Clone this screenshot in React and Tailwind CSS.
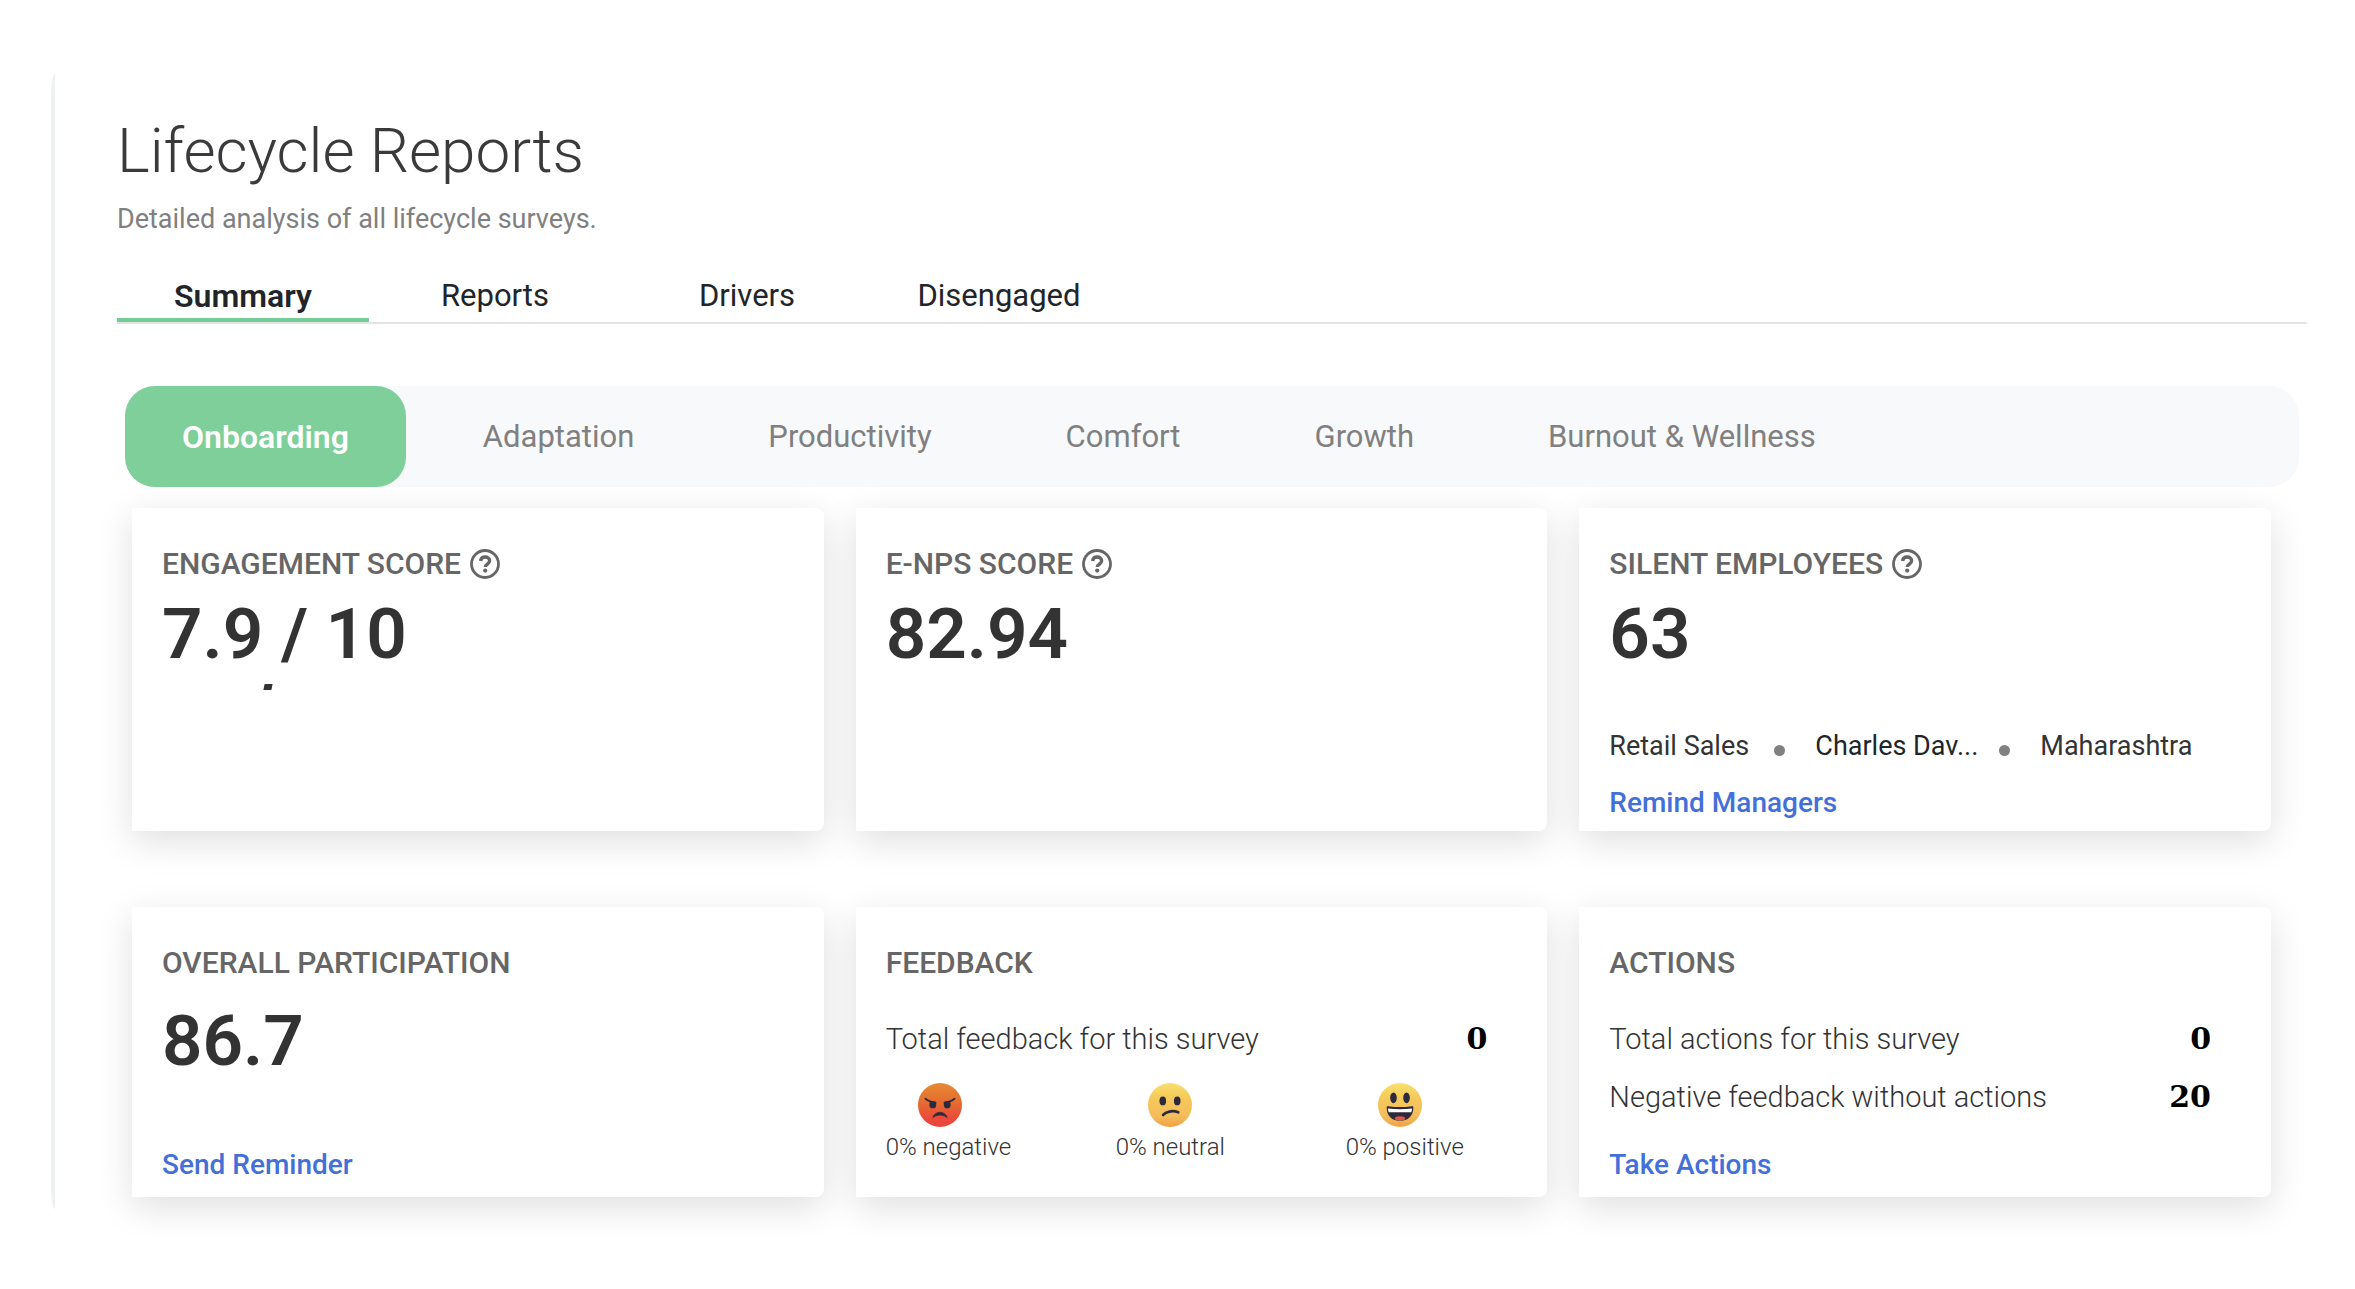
import { useState } from "react";

const TABS = ["Summary", "Reports", "Drivers", "Disengaged"];

const STAGES = [
  "Onboarding",
  "Adaptation",
  "Productivity",
  "Comfort",
  "Growth",
  "Burnout & Wellness",
];

const HelpIcon = () => (
  <svg className="w-8 h-8 shrink-0" viewBox="0 0 32 32" fill="none">
    <circle cx="16" cy="16" r="13.5" stroke="currentColor" strokeWidth="2.8" />
    <path
      d="M11.6 13c.2-2.6 2-4 4.500-4 2.600 0 4.500 1.400 4.500 3.700 0 1.600-.9 2.600-2.300 3.500-1.300.8-2 1.300-2 2.700"
      stroke="currentColor"
      strokeWidth="3.4"
    />
    <circle cx="16.2" cy="22.6" r="2.1" fill="currentColor" />
  </svg>
);

const AngryFace = () => (
  <svg className="w-11 h-11" viewBox="0 0 64 64">
    <defs>
      <linearGradient id="angry" x1="0" y1="0" x2="0" y2="1">
        <stop offset="0" stopColor="#e68a33" />
        <stop offset="0.45" stopColor="#e56b30" />
        <stop offset="0.8" stopColor="#ea4a3a" />
        <stop offset="1" stopColor="#ec4440" />
      </linearGradient>
    </defs>
    <circle cx="32" cy="32" r="32" fill="url(#angry)" />
    <path
      d="M11 23c4 3.500 8 5 14.500 5.500M53 23c-4 3.500-8 5-14.500 5.500"
      fill="none"
      stroke="#2b2b3d"
      strokeWidth="2.800"
      strokeLinecap="round"
    />
    <ellipse cx="21.5" cy="31.5" rx="5" ry="5.4" fill="#2b2b3d" />
    <ellipse cx="42.5" cy="31.5" rx="5" ry="5.4" fill="#2b2b3d" />
    <path
      d="M21.500 50.500c1.500-5 5.500-8 10.500-8s9 3 10.500 8c-3-2.500-6.500-3.800-10.500-3.800s-7.500 1.300-10.500 3.800z"
      fill="#2b2b3d"
      stroke="#2b2b3d"
      strokeLinejoin="round"
    />
  </svg>
);

const ConfusedFace = () => (
  <svg className="w-11 h-11" viewBox="0 0 64 64">
    <defs>
      <linearGradient id="confused" x1="0" y1="0" x2="0" y2="1">
        <stop offset="0" stopColor="#f8e06c" />
        <stop offset="0.35" stopColor="#f5c95a" />
        <stop offset="0.75" stopColor="#f4bd5c" />
        <stop offset="1" stopColor="#f0a044" />
      </linearGradient>
    </defs>
    <circle cx="32" cy="32" r="32" fill="url(#confused)" />
    <ellipse cx="21.5" cy="26" rx="4.8" ry="6.5" fill="#2b2b3d" />
    <ellipse cx="42.5" cy="26" rx="4.8" ry="6.5" fill="#2b2b3d" />
    <path
      d="M22 46.500c4-5 13-7 22-4"
      fill="none"
      stroke="#2b2b3d"
      strokeWidth="4"
      strokeLinecap="round"
    />
  </svg>
);

const HappyFace = () => (
  <svg className="w-11 h-11" viewBox="0 0 64 64">
    <defs>
      <linearGradient id="happy" x1="0" y1="0" x2="0" y2="1">
        <stop offset="0" stopColor="#f8e06c" />
        <stop offset="0.35" stopColor="#f5c95a" />
        <stop offset="0.75" stopColor="#f4bd5c" />
        <stop offset="1" stopColor="#f0a044" />
      </linearGradient>
      <clipPath id="mouth">
        <path d="M12.500 35.500c0-1.500 1-2 2.500-1.800 11 1.800 23 1.800 34 0 1.500-.2 2.500.3 2.500 1.800C51.500 48 43 55 32 55S12.500 48 12.500 35.500z" />
      </clipPath>
    </defs>
    <circle cx="32" cy="32" r="32" fill="url(#happy)" />
    <ellipse cx="22.5" cy="21.5" rx="4.8" ry="7.8" fill="#2b2b3d" />
    <ellipse cx="41.5" cy="21.5" rx="4.8" ry="7.8" fill="#2b2b3d" />
    <g clipPath="url(#mouth)">
      <rect x="10" y="30" width="44" height="28" fill="#2b2b3d" />
      <path d="M14.500 37c11.500 1.500 23.500 1.500 35 0 0 2-.5 4-1.200 5.500H15.700c-.7-1.500-1.200-3.500-1.200-5.500z" fill="#fff" />
      <ellipse cx="32" cy="51.5" rx="7.5" ry="3" fill="#e0544c" />
    </g>
  </svg>
);

const SENTIMENTS = [
  { label: "0% negative", Face: AngryFace },
  { label: "0% neutral", Face: ConfusedFace },
  { label: "0% positive", Face: HappyFace },
];

const Card = ({ title, help, children }) => (
  <section className="flex flex-col rounded-r-lg bg-white px-[30px] pt-9 shadow-[0_10px_36px_rgba(0,0,0,0.13)]">
    <h2 className="flex items-center gap-2 text-[30px] leading-10 font-medium text-[#666]">
      {title}
      {help && (
        <button type="button" aria-label={`About ${title.toLowerCase()}`}>
          <HelpIcon />
        </button>
      )}
    </h2>
    {children}
  </section>
);

const Score = ({ children }) => (
  <div className="relative text-[71px] leading-[76px] font-semibold text-[#333]">{children}</div>
);

const CardLink = ({ children }) => (
  <a href="#" className="self-start text-[28px] leading-9 font-medium text-[#4370d8]">
    {children}
  </a>
);

const Dot = () => <span className="mt-2 h-[11px] w-[11px] shrink-0 rounded-full bg-[#808080]" />;

const CountRow = ({ label, value }) => (
  <div className="flex items-center justify-between pr-[30px] leading-10">
    <dt className="text-[29px] font-light text-[#333]">{label}</dt>
    <dd className="font-['DejaVu_Serif',serif] text-[30px] leading-9 font-bold text-black">
      {value}
    </dd>
  </div>
);

const App = () => {
  const [tab, setTab] = useState("Summary");
  const [stage, setStage] = useState("Onboarding");

  return (
    <div className="bg-white py-[74px] pl-[51px] font-['Roboto',sans-serif]">
      <main className="rounded-l-[4px_24px] border-l-4 border-[#edf2f1] pt-[41px] pr-12 pb-3 pl-[62px]">
        <h1 className="text-[62px] leading-[72px] font-light text-[#3a3a3d]">Lifecycle Reports</h1>
        <p className="mt-3 text-[27px] leading-10 text-[#808080]">
          Detailed analysis of all lifecycle surveys.
        </p>

        <nav className="mt-[35px] flex border-b-2 border-[#e3e3e3]">
          {TABS.map((name) => (
            <button
              key={name}
              type="button"
              onClick={() => setTab(name)}
              className={`w-[252px] border-b-4 leading-11 text-[#212529] ${
                tab === name
                  ? "border-[#74cc97] text-[32px] font-semibold"
                  : "border-transparent text-[31px]"
              }`}
            >
              {name}
            </button>
          ))}
        </nav>

        <div className="mx-2 mt-[62px] flex rounded-[30px] bg-[#f8f9fb]">
          {STAGES.map((name) => (
            <button
              key={name}
              type="button"
              onClick={() => setStage(name)}
              className={`mr-5 h-[101px] rounded-[30px] px-[57px] leading-10 ${
                stage === name
                  ? "bg-[#7ecf9a] text-[32px] font-semibold text-white"
                  : "text-[31px] text-[#808080]"
              }`}
            >
              {name}
            </button>
          ))}
        </div>

        <div className="mt-[21px] mr-9 ml-[15px] grid grid-cols-3 grid-rows-[323px_290px] gap-x-8 gap-y-[76px]">
          <Card title="ENGAGEMENT SCORE" help>
            <div className="mt-3">
              <Score>
                7.9 / 10
                <span className="absolute top-[88px] left-[102px] h-1.5 w-2 -skew-x-12 bg-[#333]" />
              </Score>
            </div>
          </Card>

          <Card title="E-NPS SCORE" help>
            <div className="mt-3">
              <Score>82.94</Score>
            </div>
          </Card>

          <Card title="SILENT EMPLOYEES" help>
            <div className="mt-3">
              <Score>63</Score>
            </div>
            <ul className="mt-auto flex items-center text-[27px] leading-9 text-[#333]">
              <li className="w-[165px]">Retail Sales</li>
              <Dot />
              <li className="w-[214px] pl-[30px] text-[#212529]">Charles Dav...</li>
              <Dot />
              <li className="pl-[30px]">Maharashtra</li>
            </ul>
            <div className="mt-[21px] mb-[10px] flex">
              <CardLink>Remind Managers</CardLink>
            </div>
          </Card>

          <Card title="OVERALL PARTICIPATION">
            <div className="mt-5">
              <Score>86.7</Score>
            </div>
            <div className="mt-auto mb-[14px] flex">
              <CardLink>Send Reminder</CardLink>
            </div>
          </Card>

          <Card title="FEEDBACK">
            <dl className="mt-9">
              <CountRow label="Total feedback for this survey" value="0" />
            </dl>
            <ul className="mt-6 flex">
              {SENTIMENTS.map(({ label, Face }) => (
                <li key={label} className="w-[230px] shrink-0 last:w-auto">
                  <div className="pl-8">
                    <Face />
                  </div>
                  <p className="mt-1 text-2xl font-light text-[#333]">{label}</p>
                </li>
              ))}
            </ul>
          </Card>

          <Card title="ACTIONS">
            <dl className="mt-9 flex flex-col gap-[18px]">
              <CountRow label="Total actions for this survey" value="0" />
              <CountRow label="Negative feedback without actions" value="20" />
            </dl>
            <div className="mt-auto mb-[14px] flex">
              <CardLink>Take Actions</CardLink>
            </div>
          </Card>
        </div>
      </main>
    </div>
  );
};

export default App;
